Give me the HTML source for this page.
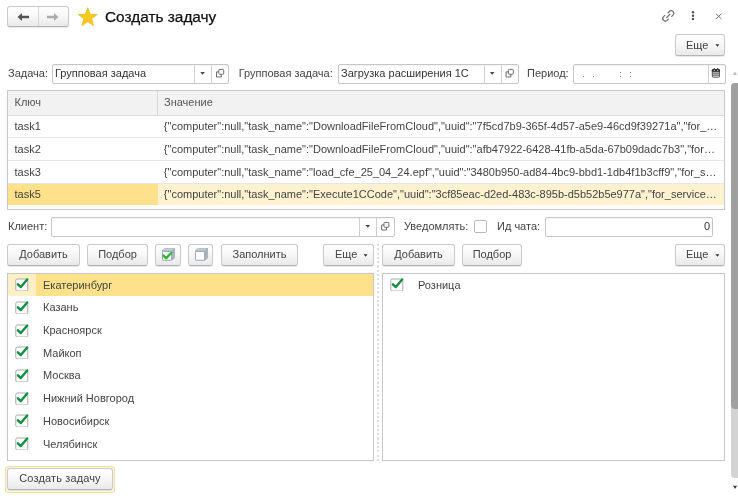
<!DOCTYPE html>
<html><head><meta charset="utf-8">
<style>
*{box-sizing:border-box;margin:0;padding:0}
html,body{width:738px;height:496px;overflow:hidden;background:#fff}
body{filter:blur(0.3px);position:relative;font-family:"Liberation Sans",sans-serif;font-size:11px;color:#434343}
.a{position:absolute}
.t{position:absolute;font-size:11px;line-height:12px;white-space:nowrap}
.btn{position:absolute;border:1px solid #cacaca;border-bottom-color:#b3b3b3;border-radius:3px;background:linear-gradient(#ffffff 0%,#f7f7f7 50%,#e9e9e9 100%);box-shadow:0 1px 1px rgba(0,0,0,.10);height:22px}
.fld{position:absolute;border:1px solid #c6c6c6;border-radius:2px;background:#fff;height:20px;box-shadow:inset 0 1px 0 rgba(0,0,0,.04)}
.sep{position:absolute;top:0;bottom:0;width:1px;background:#d0d0d0}
.hl{position:absolute;left:0;right:0;height:1px;background:#e8e8e8}
.cb{position:absolute;width:13px;height:13px;border:1px solid #bababa;border-radius:2px;background:#fff}
.dk{color:#333}
</style></head><body>

<div class="btn" style="left:7px;top:6px;width:62px;height:21px"></div>
<div class="a" style="left:38px;top:7px;width:1px;height:19px;background:#d6d6d6"></div>
<svg class="a" style="left:17px;top:12px" width="13" height="10" viewBox="0 0 13 10"><path d="M0.5 5 L5 0.9 L5 3.7 L12 3.7 L12 6.3 L5 6.3 L5 9.1 Z" fill="#555"/></svg>
<svg class="a" style="left:46px;top:12px" width="13" height="10" viewBox="0 0 13 10"><path d="M12.5 5 L8 0.9 L8 3.7 L1 3.7 L1 6.3 L8 6.3 L8 9.1 Z" fill="#ababab"/></svg>
<svg class="a" style="left:76px;top:6px" width="24" height="22" viewBox="76 6 24 22"><path d="M87.75 7.70 L90.14 14.32 L97.17 14.54 L91.61 18.85 L93.57 25.61 L87.75 21.66 L81.93 25.61 L83.89 18.85 L78.33 14.54 L85.36 14.32Z" fill="#f8c91c" stroke="#e6b40e" stroke-width="0.7" stroke-linejoin="round"/></svg>
<div class="t" style="left:105px;top:9px;font-size:15.4px;line-height:16px;color:#111;-webkit-text-stroke:0.25px #111">Создать задачу</div>
<svg class="a" style="left:658px;top:6px" width="22" height="20" viewBox="658 6 22 20"><g fill="none" stroke="#777" stroke-width="1.3" stroke-linecap="round"><path d="M668.09 12.73 L669.36 11.46 A2.6 2.6 0 0 1 673.04 15.14 L671.77 16.41"/><path d="M668.51 19.07 L667.24 20.34 A2.6 2.6 0 0 1 663.56 16.66 L664.83 15.39"/><path d="M666.7 17.5 L669.9 14.3"/></g></svg>
<svg class="a" style="left:690px;top:10px" width="6" height="12" viewBox="0 0 6 12"><circle cx="3" cy="2.3" r="1.25" fill="#555"/><circle cx="3" cy="5.7" r="1.25" fill="#555"/><circle cx="3" cy="8.9" r="1.25" fill="#555"/></svg>
<svg class="a" style="left:714px;top:12px" width="9" height="9" viewBox="0 0 9 9"><path d="M1.9 1.7 L7.5 7 M7.5 1.7 L1.9 7" stroke="#707070" stroke-width="1"/></svg>
<div class="btn" style="left:675px;top:34px;width:50px;height:22px"></div>
<div class="t" style="left:686px;top:39px">Еще</div>
<svg class="a" style="left:714px;top:43px" width="8" height="6" viewBox="714 43 8 6"><path d="M715.4 44.3 H719.4 L717.4 46.699999999999996Z" fill="#333"/></svg>
<div class="t" style="left:8px;top:67px">Задача:</div>
<div class="fld" style="left:52px;top:64px;width:177px"><div class="sep" style="left:141px"></div><div class="sep" style="left:158px"></div></div>
<div class="t dk" style="left:55px;top:67px">Групповая задача</div>
<svg class="a" style="left:199px;top:71px" width="8" height="6" viewBox="199 71 8 6"><path d="M200.3 72.1 H204.9 L202.60000000000002 74.8Z" fill="#444"/></svg>
<svg class="a" style="left:214px;top:67px" width="14" height="14" viewBox="214 67 14 14"><g fill="none" stroke="#5e5e5e" stroke-width="0.9"><rect x="218.8" y="69.4" width="4.9" height="4.9" rx="0.8"/><path d="M218.8 71.9 H216.5 V77.0 H221.3 V74.30000000000001"/></g></svg>
<div class="t" style="left:238.7px;top:67px">Групповая задача:</div>
<div class="fld" style="left:338px;top:64px;width:181px"><div class="sep" style="left:145px"></div><div class="sep" style="left:162px"></div></div>
<div class="t dk" style="left:341px;top:67px">Загрузка расширения 1С</div>
<svg class="a" style="left:488px;top:71px" width="8" height="6" viewBox="488 71 8 6"><path d="M489.9 72.1 H494.5 L492.2 74.8Z" fill="#444"/></svg>
<svg class="a" style="left:504px;top:67px" width="14" height="14" viewBox="504 67 14 14"><g fill="none" stroke="#5e5e5e" stroke-width="0.9"><rect x="508.4" y="69.4" width="4.9" height="4.9" rx="0.8"/><path d="M508.4 71.9 H506.09999999999997 V77.0 H510.9 V74.30000000000001"/></g></svg>
<div class="t" style="left:527px;top:67px">Период:</div>
<div class="fld" style="left:573px;top:64px;width:153px"><div class="sep" style="left:133.5px"></div></div>
<div class="a" style="left:583px;top:76px;width:1.3px;height:1.3px;background:#8a8a8a"></div>
<div class="a" style="left:593px;top:76px;width:1.3px;height:1.3px;background:#8a8a8a"></div>
<div class="a" style="left:620px;top:72px;width:1.3px;height:1.3px;background:#8a8a8a"></div>
<div class="a" style="left:620px;top:76px;width:1.3px;height:1.3px;background:#8a8a8a"></div>
<div class="a" style="left:630px;top:72px;width:1.3px;height:1.3px;background:#8a8a8a"></div>
<div class="a" style="left:630px;top:76px;width:1.3px;height:1.3px;background:#8a8a8a"></div>
<svg class="a" style="left:708px;top:64px" width="16" height="18" viewBox="708 64 16 18"><rect x="711.8" y="69" width="8.2" height="8.7" rx="1.6" fill="#5a5a5a"/><path d="M711.8 70.6 A1.6 1.6 0 0 1 713.4 69 H718.4 A1.6 1.6 0 0 1 720 70.6 V71.6 H711.8Z" fill="#2a2a2a"/><rect x="713.7" y="68.1" width="1.2" height="1.6" rx="0.4" fill="#333"/><rect x="717" y="68.1" width="1.2" height="1.6" rx="0.4" fill="#333"/><circle cx="714.3" cy="70.3" r="0.6" fill="#ddd"/><circle cx="717.6" cy="70.3" r="0.6" fill="#ddd"/><path d="M712.8 72.9 H719 M712.8 74.9 H719 M712.8 76.7 H719" stroke="#e4e4e4" stroke-width="0.9"/></svg>
<svg class="a" style="left:732px;top:71px" width="6" height="5" viewBox="0 0 6 5"><path d="M1 3.9 L3 0.5 L5 3.9Z" fill="#bdbdbd"/></svg>
<div class="a" style="left:731.3px;top:83px;width:10px;height:394.5px;background:#d3d3d3;border-radius:4px"></div>
<div class="a" style="left:731.3px;top:83px;width:10px;height:325.5px;background:#a0a0a0;border-radius:4px"></div>
<svg class="a" style="left:732px;top:485px" width="6" height="5" viewBox="0 0 6 5"><path d="M1 0.8 L3 4 L5 0.8Z" fill="#3a3a3a"/></svg>
<div class="a" style="left:7px;top:90px;width:718px;height:120px;border:1px solid #c8c8c8;background:#fff"></div>
<div class="a" style="left:8px;top:91px;width:716px;height:25px;background:#f2f2f2;border-bottom:1px solid #dcdcdc"></div>
<div class="a" style="left:157px;top:91px;width:1px;height:24px;background:#d8d8d8"></div>
<div class="t" style="left:14.5px;top:96px;color:#555">Ключ</div>
<div class="t" style="left:164px;top:96px;color:#555">Значение</div>
<div class="a" style="left:8px;top:137px;width:716px;height:1px;background:#e6e6e6"></div>
<div class="a" style="left:8px;top:160px;width:716px;height:1px;background:#e6e6e6"></div>
<div class="a" style="left:8px;top:183px;width:716px;height:1px;background:#e6e6e6"></div>
<div class="a" style="left:8px;top:184px;width:150px;height:21px;background:#fde28b"></div>
<div class="a" style="left:158px;top:184px;width:566px;height:21px;background:#fdf2cf"></div>
<div class="t" style="left:14.5px;top:120.3px">task1</div>
<div class="t" style="left:163.8px;top:120.3px">{"computer":null,"task_name":"DownloadFileFromCloud","uuid":"7f5cd7b9-365f-4d57-a5e9-46cd9f39271a","for_…</div>
<div class="t" style="left:14.5px;top:143px">task2</div>
<div class="t" style="left:163.8px;top:143px">{"computer":null,"task_name":"DownloadFileFromCloud","uuid":"afb47922-6428-41fb-a5da-67b09dadc7b3","for…</div>
<div class="t" style="left:14.5px;top:165.8px">task3</div>
<div class="t" style="left:163.8px;top:165.8px">{"computer":null,"task_name":"load_cfe_25_04_24.epf","uuid":"3480b950-ad84-4bc9-bbd1-1db4f1b3cff9","for_s…</div>
<div class="t" style="left:14.5px;top:188.4px">task5</div>
<div class="t" style="left:163.8px;top:188.4px">{"computer":null,"task_name":"Execute1CCode","uuid":"3cf85eac-d2ed-483c-895b-d5b52b5e977a","for_service…</div>
<div class="t" style="left:8px;top:220px">Клиент:</div>
<div class="fld" style="left:51px;top:217px;width:344px"><div class="sep" style="left:307px"></div><div class="sep" style="left:324px"></div></div>
<svg class="a" style="left:364px;top:224px" width="8" height="6" viewBox="364 224 8 6"><path d="M365.5 225.1 H370.1 L367.8 227.79999999999998Z" fill="#444"/></svg>
<svg class="a" style="left:380px;top:220px" width="14" height="14" viewBox="380 220 14 14"><g fill="none" stroke="#5e5e5e" stroke-width="0.9"><rect x="384" y="222.4" width="4.9" height="4.9" rx="0.8"/><path d="M384 224.9 H381.7 V230.0 H386.5 V227.3"/></g></svg>
<div class="t" style="left:404px;top:220px">Уведомлять:</div>
<div class="cb" style="left:474px;top:220px"></div>
<div class="t" style="left:497px;top:220px">Ид чата:</div>
<div class="fld" style="left:545px;top:217px;width:168px"></div>
<div class="t dk" style="left:704px;top:220px">0</div>
<div class="btn" style="left:7px;top:244px;width:73px"></div>
<div class="t" style="left:7px;width:73px;text-align:center;top:248px">Добавить</div>
<div class="btn" style="left:87px;top:244px;width:61px"></div>
<div class="t" style="left:87px;width:61px;text-align:center;top:248px">Подбор</div>
<div class="btn" style="left:155px;top:244px;width:26px"></div>
<div class="btn" style="left:188px;top:244px;width:25px"></div>
<div class="btn" style="left:221px;top:244px;width:77px"></div>
<div class="t" style="left:221px;width:77px;text-align:center;top:248px">Заполнить</div>
<div class="btn" style="left:323px;top:244px;width:51px"></div>
<div class="t" style="left:335px;top:248px">Еще</div>
<svg class="a" style="left:362px;top:253px" width="8" height="6" viewBox="362 253 8 6"><path d="M363.6 254.3 H367.6 L365.6 256.7Z" fill="#333"/></svg>
<div class="a" style="left:377px;top:244px;width:2px;height:217px;background:repeating-linear-gradient(rgba(200,200,200,.6) 0 2px,transparent 2px 4.3px)"></div>
<div class="btn" style="left:382px;top:244px;width:73px"></div>
<div class="t" style="left:382px;width:73px;text-align:center;top:248px">Добавить</div>
<div class="btn" style="left:462px;top:244px;width:60px"></div>
<div class="t" style="left:462px;width:60px;text-align:center;top:248px">Подбор</div>
<div class="btn" style="left:675px;top:244px;width:50px"></div>
<div class="t" style="left:686px;top:248px">Еще</div>
<svg class="a" style="left:714px;top:253px" width="8" height="6" viewBox="714 253 8 6"><path d="M715.4 254.3 H719.4 L717.4 256.7Z" fill="#333"/></svg>
<svg class="a" style="left:161px;top:246.8px" width="16" height="15" viewBox="161 246.8 16 15"><path d="M162 250.8 L164.8 248.4 H174.6 L171.7 250.8Z" fill="#cdd6de" stroke="#9aa7b2" stroke-width="0.7" stroke-linejoin="round"/><path d="M171.7 250.8 L174.6 248.4 V257.7 L171.7 260.1Z" fill="#aab6c1" stroke="#9aa7b2" stroke-width="0.7" stroke-linejoin="round"/><rect x="162.45" y="251.25" width="9.2" height="8.8" rx="0.8" fill="#fff" stroke="#8e9ba6" stroke-width="0.9"/><path d="M163.5 255.4 L166.2 258.0 L171.2 252.8" fill="none" stroke="#2db52d" stroke-width="2.4" stroke-linecap="round" stroke-linejoin="round"/></svg>
<svg class="a" style="left:194px;top:246.8px" width="16" height="15" viewBox="194 246.8 16 15"><path d="M195 250.8 L197.8 248.4 H207.6 L204.7 250.8Z" fill="#cdd6de" stroke="#9aa7b2" stroke-width="0.7" stroke-linejoin="round"/><path d="M204.7 250.8 L207.6 248.4 V257.7 L204.7 260.1Z" fill="#aab6c1" stroke="#9aa7b2" stroke-width="0.7" stroke-linejoin="round"/><rect x="195.45" y="251.25" width="9.2" height="8.8" rx="0.8" fill="#fff" stroke="#8e9ba6" stroke-width="0.9"/></svg>
<div class="a" style="left:7px;top:273px;width:367px;height:188px;border:1px solid #c8c8c8"></div>
<div class="a" style="left:8px;top:274px;width:28px;height:22.2px;background:#fdf0c6"></div>
<div class="a" style="left:36px;top:274px;width:337px;height:22.2px;background:#fde28b"></div>
<div class="a" style="left:382px;top:273px;width:343px;height:188px;border:1px solid #c8c8c8"></div>
<svg class="a" style="left:15px;top:276px" width="15" height="15" viewBox="0 0 15 15"><rect x="0.8" y="3" width="12" height="12" rx="1.5" fill="#fff" stroke="#a9a9a9" stroke-width="1"/><path d="M2.9 8.3 L5.8 11.1 L12.2 3.4" fill="none" stroke="#0f9043" stroke-width="2.4" stroke-linecap="round" stroke-linejoin="round"/></svg>
<div class="t" style="left:43px;top:278.6px">Екатеринбург</div>
<svg class="a" style="left:15px;top:299px" width="15" height="15" viewBox="0 0 15 15"><rect x="0.8" y="3" width="12" height="12" rx="1.5" fill="#fff" stroke="#a9a9a9" stroke-width="1"/><path d="M2.9 8.3 L5.8 11.1 L12.2 3.4" fill="none" stroke="#0f9043" stroke-width="2.4" stroke-linecap="round" stroke-linejoin="round"/></svg>
<div class="t" style="left:43px;top:301.3px">Казань</div>
<svg class="a" style="left:15px;top:322px" width="15" height="15" viewBox="0 0 15 15"><rect x="0.8" y="3" width="12" height="12" rx="1.5" fill="#fff" stroke="#a9a9a9" stroke-width="1"/><path d="M2.9 8.3 L5.8 11.1 L12.2 3.4" fill="none" stroke="#0f9043" stroke-width="2.4" stroke-linecap="round" stroke-linejoin="round"/></svg>
<div class="t" style="left:43px;top:324.0px">Красноярск</div>
<svg class="a" style="left:15px;top:344px" width="15" height="15" viewBox="0 0 15 15"><rect x="0.8" y="3" width="12" height="12" rx="1.5" fill="#fff" stroke="#a9a9a9" stroke-width="1"/><path d="M2.9 8.3 L5.8 11.1 L12.2 3.4" fill="none" stroke="#0f9043" stroke-width="2.4" stroke-linecap="round" stroke-linejoin="round"/></svg>
<div class="t" style="left:43px;top:346.7px">Майкоп</div>
<svg class="a" style="left:15px;top:367px" width="15" height="15" viewBox="0 0 15 15"><rect x="0.8" y="3" width="12" height="12" rx="1.5" fill="#fff" stroke="#a9a9a9" stroke-width="1"/><path d="M2.9 8.3 L5.8 11.1 L12.2 3.4" fill="none" stroke="#0f9043" stroke-width="2.4" stroke-linecap="round" stroke-linejoin="round"/></svg>
<div class="t" style="left:43px;top:369.4px">Москва</div>
<svg class="a" style="left:15px;top:390px" width="15" height="15" viewBox="0 0 15 15"><rect x="0.8" y="3" width="12" height="12" rx="1.5" fill="#fff" stroke="#a9a9a9" stroke-width="1"/><path d="M2.9 8.3 L5.8 11.1 L12.2 3.4" fill="none" stroke="#0f9043" stroke-width="2.4" stroke-linecap="round" stroke-linejoin="round"/></svg>
<div class="t" style="left:43px;top:392.1px">Нижний Новгород</div>
<svg class="a" style="left:15px;top:412px" width="15" height="15" viewBox="0 0 15 15"><rect x="0.8" y="3" width="12" height="12" rx="1.5" fill="#fff" stroke="#a9a9a9" stroke-width="1"/><path d="M2.9 8.3 L5.8 11.1 L12.2 3.4" fill="none" stroke="#0f9043" stroke-width="2.4" stroke-linecap="round" stroke-linejoin="round"/></svg>
<div class="t" style="left:43px;top:414.8px">Новосибирск</div>
<svg class="a" style="left:15px;top:435px" width="15" height="15" viewBox="0 0 15 15"><rect x="0.8" y="3" width="12" height="12" rx="1.5" fill="#fff" stroke="#a9a9a9" stroke-width="1"/><path d="M2.9 8.3 L5.8 11.1 L12.2 3.4" fill="none" stroke="#0f9043" stroke-width="2.4" stroke-linecap="round" stroke-linejoin="round"/></svg>
<div class="t" style="left:43px;top:437.5px">Челябинск</div>
<svg class="a" style="left:390px;top:276px" width="15" height="15" viewBox="0 0 15 15"><rect x="0.8" y="3" width="12" height="12" rx="1.5" fill="#fff" stroke="#a9a9a9" stroke-width="1"/><path d="M2.9 8.3 L5.8 11.1 L12.2 3.4" fill="none" stroke="#0f9043" stroke-width="2.4" stroke-linecap="round" stroke-linejoin="round"/></svg>
<div class="t" style="left:418px;top:278.6px">Розница</div>
<div class="a" style="left:5px;top:466px;width:110px;height:27px;border:1px solid #eee0a0;border-radius:3px;background:#fdf9e0"></div>
<div class="btn" style="left:7px;top:468px;width:106px;height:22px"></div>
<div class="t" style="left:7px;width:106px;text-align:center;top:472px;letter-spacing:0.14px">Создать задачу</div>
</body></html>
